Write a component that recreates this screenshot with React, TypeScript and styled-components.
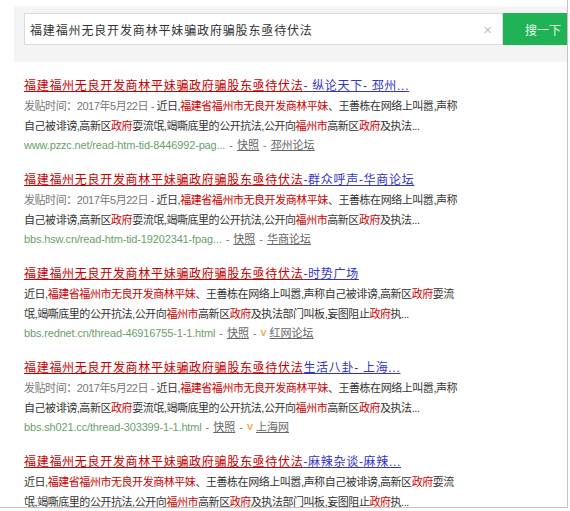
import styled, { createGlobalStyle } from "styled-components";

const GlobalStyle = createGlobalStyle`
  html, body {
    margin: 0;
    padding: 0;
    background: #fff;
  }
  body {
    font-family: "Liberation Sans", "Noto Sans CJK SC", sans-serif;
  }
`;

type Piece = { text: string; hot?: boolean; muted?: boolean };

type Result = {
  suffix: string;
  lines: Piece[][];
  url?: string;
  vip?: boolean;
  site?: string;
};

const dated: Piece = { text: "发贴时间：2017年5月22日 - ", muted: true };

const shortBody: Piece[][] = [
  [
    dated,
    { text: "近日," },
    { text: "福建省福州市无良开发商林平妹", hot: true },
    { text: "、王善栋在网络上叫嚣,声称" },
  ],
  [
    { text: "自己被诽谤,高新区" },
    { text: "政府", hot: true },
    { text: "耍流氓,竭嘶底里的公开抗法,公开向" },
    { text: "福州市", hot: true },
    { text: "高新区" },
    { text: "政府", hot: true },
    { text: "及执法..." },
  ],
];

const longBody: Piece[][] = [
  [
    { text: "近日," },
    { text: "福建省福州市无良开发商林平妹", hot: true },
    { text: "、王善栋在网络上叫嚣,声称自己被诽谤,高新区" },
    { text: "政府", hot: true },
    { text: "耍流" },
  ],
  [
    { text: "氓,竭嘶底里的公开抗法,公开向" },
    { text: "福州市", hot: true },
    { text: "高新区" },
    { text: "政府", hot: true },
    { text: "及执法部门叫板,妄图阻止" },
    { text: "政府", hot: true },
    { text: "执..." },
  ],
];

const results: Result[] = [
  {
    suffix: "- 纵论天下- 邳州...",
    lines: shortBody,
    url: "www.pzzc.net/read-htm-tid-8446992-pag...",
    site: "邳州论坛",
  },
  {
    suffix: "-群众呼声-华商论坛",
    lines: shortBody,
    url: "bbs.hsw.cn/read-htm-tid-19202341-fpag...",
    site: "华商论坛",
  },
  {
    suffix: "-时势广场",
    lines: longBody,
    url: "bbs.rednet.cn/thread-46916755-1-1.html",
    vip: true,
    site: "红网论坛",
  },
  {
    suffix: "生活八卦- 上海...",
    lines: shortBody,
    url: "bbs.sh021.cc/thread-303399-1-1.html",
    vip: true,
    site: "上海网",
  },
  {
    suffix: "-麻辣杂谈-麻辣...",
    lines: longBody,
  },
];

const QUERY = "福建福州无良开发商林平妹骗政府骗股东亟待伏法";

export default function App() {
  return (
    <>
      <GlobalStyle />
      <Page>
        <SearchPanel>
          <SearchBox>
            <QueryText>{QUERY}</QueryText>
            <Clear>×</Clear>
          </SearchBox>
          <SearchButton>搜一下</SearchButton>
        </SearchPanel>

        <ResultList>
          {results.map((r, i) => (
            <Item key={i}>
              <Title>
                <TitleMain>{QUERY}</TitleMain>
                <TitleSuffix>{r.suffix}</TitleSuffix>
              </Title>
              <Snippet>
                {r.lines.map((line, j) => (
                  <Line key={j}>
                    {line.map((p, k) => (
                      <Part key={k} $hot={p.hot} $muted={p.muted}>
                        {p.text}
                      </Part>
                    ))}
                  </Line>
                ))}
              </Snippet>
              {r.url && (
                <Meta>
                  <Url>{r.url}</Url>
                  <Sep>-</Sep>
                  <MetaLink>快照</MetaLink>
                  <Sep>-</Sep>
                  {r.vip && <Vip>V</Vip>}
                  <MetaLink>{r.site}</MetaLink>
                </Meta>
              )}
            </Item>
          ))}
        </ResultList>
      </Page>
    </>
  );
}

const Page = styled.div`
  width: 567px;
  height: 507px;
  border-right: 1px solid #c4c4c4;
  border-bottom: 1px solid #c4c4c4;
  overflow: hidden;
  background: #fff;
`;

const SearchPanel = styled.div`
  margin: 6px 0 0 14px;
  height: 56px;
  box-sizing: border-box;
  padding: 6px 0 0 10px;
  background: #f4f4f4;
  border-top: 1px solid #f9f9f9;
  display: flex;
  align-items: flex-start;
`;

const SearchBox = styled.div`
  width: 479px;
  height: 32px;
  box-sizing: border-box;
  border: 1px solid #dadada;
  background: #fff;
  display: flex;
  align-items: center;
  justify-content: space-between;
  padding: 0 10px 0 5px;
`;

const QueryText = styled.span`
  font-size: 12px;
  letter-spacing: 0.85px;
  color: #333;
  white-space: nowrap;
`;

const Clear = styled.span`
  font-size: 15px;
  color: #c4c4c4;
  line-height: 1;
`;

const SearchButton = styled.div`
  flex: 1;
  height: 32px;
  background: #1fb356;
  color: #e8f7ec;
  font-size: 12px;
  display: flex;
  align-items: center;
  padding-left: 22px;
  white-space: nowrap;
`;

const ResultList = styled.div`
  padding: 15px 0 0 24px;
  display: flex;
  flex-direction: column;
`;

const Item = styled.div`
  margin-bottom: 17px;
`;

const Title = styled.div`
  font-size: 12px;
  letter-spacing: 0.7px;
  line-height: 18px;
  white-space: nowrap;
`;

const TitleMain = styled.span`
  color: #c40000;
  text-decoration: underline;
`;

const TitleSuffix = styled.span`
  color: #3434c8;
  text-decoration: underline;
`;

const Snippet = styled.div`
  margin-top: 1px;
  font-size: 11px;
  letter-spacing: -0.45px;
  line-height: 20px;
  color: #333;
`;

const Line = styled.div`
  white-space: nowrap;
`;

const Part = styled.span<{ $hot?: boolean; $muted?: boolean }>`
  color: ${(p) => (p.$hot ? "#c00" : p.$muted ? "#777" : "#333")};
`;

const Meta = styled.div`
  font-size: 11px;
  line-height: 18px;
  white-space: nowrap;
  display: flex;
  align-items: center;
  gap: 4px;
`;

const Url = styled.span`
  color: #6a9f6a;
  letter-spacing: -0.15px;
`;

const Sep = styled.span`
  color: #777;
`;

const MetaLink = styled.span`
  color: #666;
  text-decoration: underline;
`;

const Vip = styled.span`
  color: #f0a33c;
  font-weight: bold;
  font-size: 9px;
  margin-right: -1px;
`;
